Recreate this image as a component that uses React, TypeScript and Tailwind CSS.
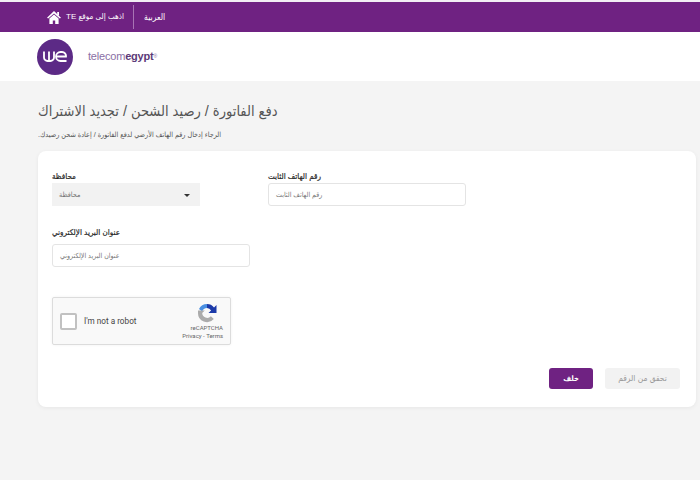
const ARABIC = "font-['Liberation_Sans','DejaVu_Sans_Condensed','DejaVu_Sans',sans-serif]";

function Label({ text, className }: { text: string; className: string }) {
  return <div className={`text-left text-[8px] text-[#222] [-webkit-text-stroke:0.2px_#333] ${className}`}>{text}</div>;
}

function Field({ label, placeholder, labelClass }: { label: string; placeholder: string; labelClass: string }) {
  return (
    <div>
      <Label text={label} className={labelClass} />
      <div className="flex h-[23px] w-[198px] items-center rounded-[3px] border border-[#e4e4e4] bg-white px-[7px] pt-[1px] text-[7px] text-[#777]">
        {placeholder}
      </div>
    </div>
  );
}

function RecaptchaLogo() {
  return (
    <svg width="20" height="20" viewBox="0 0 20 20">
      <path d="M10 1a9 9 0 0 1 7 3.400L19.500 2v8h-8l2.600-2.600A5 5 0 0 0 10 5z" fill="#1c3aa9" />
      <path d="M10 1a9 9 0 0 0-8 5l3.200 2.600A5 5 0 0 1 10 5z" fill="#4a90e2" />
      <path d="M1 10a9 9 0 0 0 15.800 6l-2.900-2.800A5 5 0 0 1 5.200 10l2.600-2.400H1z" fill="#ababab" />
    </svg>
  );
}

export default function App() {
  return (
    <div className={`min-h-[480px] w-[700px] overflow-hidden bg-[#f4f4f4] ${ARABIC}`}>
      <div className="h-[2px] bg-[#f2eef4]" />
      <div className="flex h-[30px] items-center bg-[#6f2282] pl-[47px] text-[8px] text-white">
        <svg width="14" height="13" viewBox="0 0 14 13" fill="white">
          <path d="M7 0 14 6.800 12.800 7.600 7 2.600 1.200 7.600 0 6.800z" />
          <path d="M2.400 7.400 7 3.400 11.600 7.400V13H8.200V9.500H5.800V13H2.400z" />
          <rect x="10.200" y="1" width="1.800" height="3.500" />
        </svg>
        <span className="ml-[5px]">TE اذهب إلى موقع</span>
        <div className="ml-[9px] mr-[10px] h-[24px] w-px bg-[#a874b4]" />
        <span className="text-[8.600px]">العربية</span>
      </div>

      <div className="flex h-[49px] items-center bg-white pl-[37px]">
        <div className="flex h-[36px] w-[36px] items-center justify-center rounded-full bg-[#5c2a86]">
          <svg width="24" height="11" viewBox="0 0 24 11" fill="none" stroke="white" strokeWidth="1.800">
            <path d="M1 0.500V6.500a3.500 3.500 0 0 0 3.500 3.500H7.500a3.500 3.500 0 0 0 3.500-3.500V0.500M6 0.500V10" />
            <path d="M23.500 10H17.500a4.500 4.500 0 0 1 0-9h1.500a4 4 0 0 1 4 4.500H13" />
          </svg>
        </div>
        <span className="ml-[15px] text-[11px] tracking-[-0.2px] text-[#8a6fa5]">
          telecom<span className="font-bold text-[#5c3a78]">egypt</span>
          <sup className="text-[5px]">®</sup>
        </span>
      </div>

      <div className="pt-[20px] pr-[4px] pl-[38px]">
        <h1 className="text-left text-[14.500px] leading-[20px] font-normal text-[#555]">
          دفع الفاتورة / رصيد الشحن / تجديد الاشتراك
        </h1>
        <p className="mt-[9px] text-left text-[7.200px] leading-[10px] text-[#555]">
          .الرجاء إدخال رقم الهاتف الأرضي لدفع الفاتورة / إعادة شحن رصيدك
        </p>

        <div className="mt-[11px] h-[256px] w-[658px] rounded-[8px] bg-white px-[14px] pt-[17px] shadow-[0_1px_4px_rgba(0,0,0,0.06)]">
          <div className="flex gap-[68px]">
            <div className="w-[148px]">
              <Label text="محافظة" className="h-[15px] leading-[17px]" />
              <div className="flex h-[23px] items-center justify-between bg-[#f2f2f2] pt-[1px] pr-[10px] pl-[7px] text-[7.200px] text-[#777]">
                محافظة
                <span className="h-0 w-0 border-x-[3px] border-t-[3px] border-x-transparent border-t-[#333]" />
              </div>
            </div>
            <Field label="رقم الهاتف الثابت" placeholder="رقم الهاتف الثابت" labelClass="h-[15px] leading-[17px]" />
          </div>

          <div className="mt-[19px]">
            <Field label="عنوان البريد الإلكتروني" placeholder="عنوان البريد الإلكتروني" labelClass="h-[19px] leading-[15px]" />
          </div>

          <div className="mt-[30px] flex h-[48px] w-[179px] items-center rounded-[2px] border border-[#dcdcdc] bg-[#f9f9f9] pr-[7px] pl-[7px] shadow-[0_0_3px_rgba(0,0,0,0.06)]">
            <div className="h-[17px] w-[17px] rounded-[2px] border-2 border-[#c1c1c1] bg-white" />
            <span className="ml-[7px] font-['Roboto',sans-serif] text-[8.200px] text-[#444]">I'm not a robot</span>
            <div className="ml-auto flex flex-col items-end font-['Roboto',sans-serif] text-[#666]">
              <div className="mr-[6px] h-[20px]">
                <RecaptchaLogo />
              </div>
              <span className="text-[6px] leading-[9px]">reCAPTCHA</span>
              <span className="text-[6px] leading-[8px] whitespace-nowrap">Privacy - Terms</span>
            </div>
          </div>

          <div className="mt-[23px] flex justify-end gap-[12px] pr-[2px]">
            <button className="h-[21px] w-[44px] rounded-[3px] bg-[#6f2282] text-[7.500px] font-bold text-white">خلف</button>
            <button className="h-[21px] w-[75px] rounded-[3px] bg-[#f2f2f2] text-[8.400px] text-[#999]">تحقق من الرقم</button>
          </div>
        </div>
      </div>
    </div>
  );
}
